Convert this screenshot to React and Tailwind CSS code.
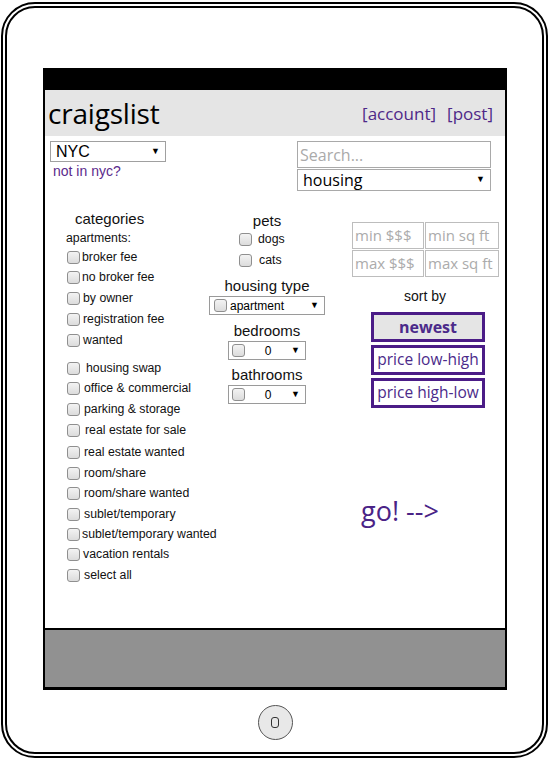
import React from 'react';

const arial = { fontFamily: '"Liberation Sans", Arial, sans-serif' };
const segoe = { fontFamily: '"Open Sans", "Noto Sans", sans-serif' };

const Box = () => (
  <span className="inline-block w-[13px] h-[13px] shrink-0 rounded-[3px] border border-[#8f8f8f] bg-gradient-to-b from-[#f3f3f3] to-[#dcdcdc]" />
);

const categories = [
  { label: 'broker fee', mt: 'mt-0', gap: 'ml-[2px]' },
  { label: 'no broker fee', mt: 'mt-0', gap: 'ml-[2px]' },
  { label: 'by owner', mt: 'mt-[1px]', gap: 'ml-[3px]' },
  { label: 'registration fee', mt: 'mt-[1px]', gap: 'ml-[3px]' },
  { label: 'wanted', mt: 'mt-[1px]', gap: 'ml-[3px]' },
  { label: 'housing swap', mt: 'mt-[8px]', gap: 'ml-[6px]' },
  { label: 'office & commercial', mt: 'mt-0', gap: 'ml-[4px]' },
  { label: 'parking & storage', mt: 'mt-[1px]', gap: 'ml-[4px]' },
  { label: 'real estate for sale', mt: 'mt-[1px]', gap: 'ml-[5px]' },
  { label: 'real estate wanted', mt: 'mt-[2px]', gap: 'ml-[4px]' },
  { label: 'room/share', mt: 'mt-[1px]', gap: 'ml-[4px]' },
  { label: 'room/share wanted', mt: 'mt-0', gap: 'ml-[4px]' },
  { label: 'sublet/temporary', mt: 'mt-[1px]', gap: 'ml-[4px]' },
  { label: 'sublet/temporary wanted', mt: 'mt-0', gap: 'ml-[2px]' },
  { label: 'vacation rentals', mt: 'mt-0', gap: 'ml-[3px]' },
  { label: 'select all', mt: 'mt-[1px]', gap: 'ml-[4px]' },
];

const SmallSelect = ({ value }) => (
  <div className="w-[78px] h-[19px] border border-[#9a9a9a] flex items-center pl-[3px] pr-[5px] bg-white">
    <Box />
    <span className="flex-1 text-center text-[12px] text-black">{value}</span>
    <span className="text-[9px] text-black">▼</span>
  </div>
);

const Label = ({ children, className = '' }) => (
  <div className={`h-[17px] leading-[17px] text-[15px] text-[#111] ${className}`}>{children}</div>
);

export default function App() {
  return (
    <div className="w-[551px] h-[761px] bg-white pt-[2px] pl-[1px]">
      <div className="w-[547px] h-[756px] border-[6px] border-double border-black rounded-[34px] flex flex-col items-start">
        {/* screen */}
        <div className="ml-[36px] mt-[60px] w-[464px] h-[622px] border-x-2 border-b-[3px] border-black flex flex-col">
          <div className="h-[22px] bg-black shrink-0" />
          <div className="h-[46px] bg-[#e5e5e5] flex items-center justify-between pl-[3px] pr-[12px] shrink-0">
            <span className="text-[28px] leading-none text-black tracking-[-0.2px]" style={segoe}>craigslist</span>
            <span className="text-[17px] text-[#4f2888] flex gap-[11px] pt-[2px]" style={segoe}>
              <span>[account]</span>
              <span>[post]</span>
            </span>
          </div>

          <div className="flex-1 bg-white" style={arial}>
            {/* top row */}
            <div className="flex justify-between pt-[5px] pl-[5px] pr-[14px]">
              <div className="flex flex-col">
                <div className="w-[116px] h-[21px] border border-[#a0a0a0] flex items-center justify-between pl-[5px] pr-[5px]">
                  <span className="text-[16px] text-black">NYC</span>
                  <span className="text-[9px] text-black">▼</span>
                </div>
                <span className="ml-[3px] mt-[1px] text-[14px] leading-[16px] text-[#5b2a8c]">not in nyc?</span>
              </div>
              <div className="flex flex-col gap-[1px]" style={segoe}>
                <div className="w-[194px] h-[27px] border border-[#a9a9a9] flex items-center pl-[2px]">
                  <span className="text-[16px] text-[#aaaaaa]">Search...</span>
                </div>
                <div className="w-[194px] h-[22px] border border-[#a9a9a9] flex items-center justify-between pl-[5px] pr-[5px]">
                  <span className="text-[16px] text-black">housing</span>
                  <span className="text-[9px] text-black" style={arial}>▼</span>
                </div>
              </div>
            </div>

            {/* columns */}
            <div className="flex mt-[19px]">
              {/* categories */}
              <div className="w-[160px] flex flex-col">
                <div className="pl-[30px] h-[18px] leading-[18px] text-[15px] text-[#111]">categories</div>
                <div className="pl-[21px] mt-[2px] h-[16px] leading-[16px] text-[12.3px] text-[#111]">apartments:</div>
                <div className="pl-[22px] mt-[1px] flex flex-col">
                  {categories.map((c) => (
                    <div key={c.label} className={`h-[20px] flex items-center ${c.mt}`}>
                      <Box />
                      <span className={`text-[12.3px] text-[#111] whitespace-nowrap ${c.gap}`}>{c.label}</span>
                    </div>
                  ))}
                </div>
              </div>

              {/* pets / housing */}
              <div className="w-[124px] flex flex-col items-center pt-[2px]">
                <Label>pets</Label>
                <div className="self-start ml-[34px] h-[20px] flex items-center gap-[6px]">
                  <Box />
                  <span className="text-[12.3px] text-[#111]">dogs</span>
                </div>
                <div className="self-start ml-[34px] mt-[1px] h-[20px] flex items-center gap-[7px]">
                  <Box />
                  <span className="text-[12.3px] text-[#111]">cats</span>
                </div>
                <Label className="mt-[7px]">housing type</Label>
                <div className="mt-[2px] w-[116px] h-[19px] border border-[#9a9a9a] flex items-center pl-[4px] pr-[5px]">
                  <Box />
                  <span className="ml-[3px] flex-1 text-[12px] text-black">apartment</span>
                  <span className="text-[9px] text-black">▼</span>
                </div>
                <Label className="mt-[7px]">bedrooms</Label>
                <div className="mt-[2px]">
                  <SmallSelect value="0" />
                </div>
                <Label className="mt-[6px]">bathrooms</Label>
                <div className="mt-[2px]">
                  <SmallSelect value="0" />
                </div>
              </div>

              {/* price / sort */}
              <div className="flex-1 flex flex-col pt-[12px]">
                <div className="ml-[23px] grid grid-cols-[72px_74px] gap-x-[1px] gap-y-[1px]" style={segoe}>
                  {['min $$$', 'min sq ft', 'max $$$', 'max sq ft'].map((t) => (
                    <div key={t} className="h-[27px] border border-[#bdbdbd] flex items-center pl-[2px] text-[15px] text-[#ababab]">
                      {t}
                    </div>
                  ))}
                </div>
                <div className="ml-[42px] w-[114px] flex flex-col">
                  <div className="mt-[11px] h-[16px] leading-[16px] text-[14px] text-[#111] text-center pr-[6px]">sort by</div>
                  <div className="mt-[8px] flex flex-col gap-[3px]" style={segoe}>
                    <div className="h-[30px] border-[3px] border-[#4b1c87] bg-[#e5e5e5] flex items-center justify-center text-[16px] font-bold text-[#4b2a8a]">
                      newest
                    </div>
                    <div className="h-[30px] border-[3px] border-[#4b1c87] bg-white flex items-center justify-center text-[15.5px] text-[#4b2a8a]">
                      price low-high
                    </div>
                    <div className="h-[30px] border-[3px] border-[#4b1c87] bg-white flex items-center justify-center text-[15.5px] text-[#4b2a8a]">
                      price high-low
                    </div>
                  </div>
                </div>
                <div className="ml-[32px] mt-[85px] h-[36px] leading-[36px] text-[27px] text-[#4a2386]" style={segoe}>
                  go! --&gt;
                </div>
              </div>
            </div>
          </div>

          <div className="h-[59px] border-t-2 border-black bg-[#919191] shrink-0" />
        </div>

        {/* home button */}
        <div className="self-center ml-[1px] mt-[15px] w-[35px] h-[35px] rounded-full border border-[#555] bg-[#e8e8e8] flex items-center justify-center">
          <span className="w-[8px] h-[11px] rounded-[3px] border-[1.5px] border-[#333]" />
        </div>
      </div>
    </div>
  );
}
